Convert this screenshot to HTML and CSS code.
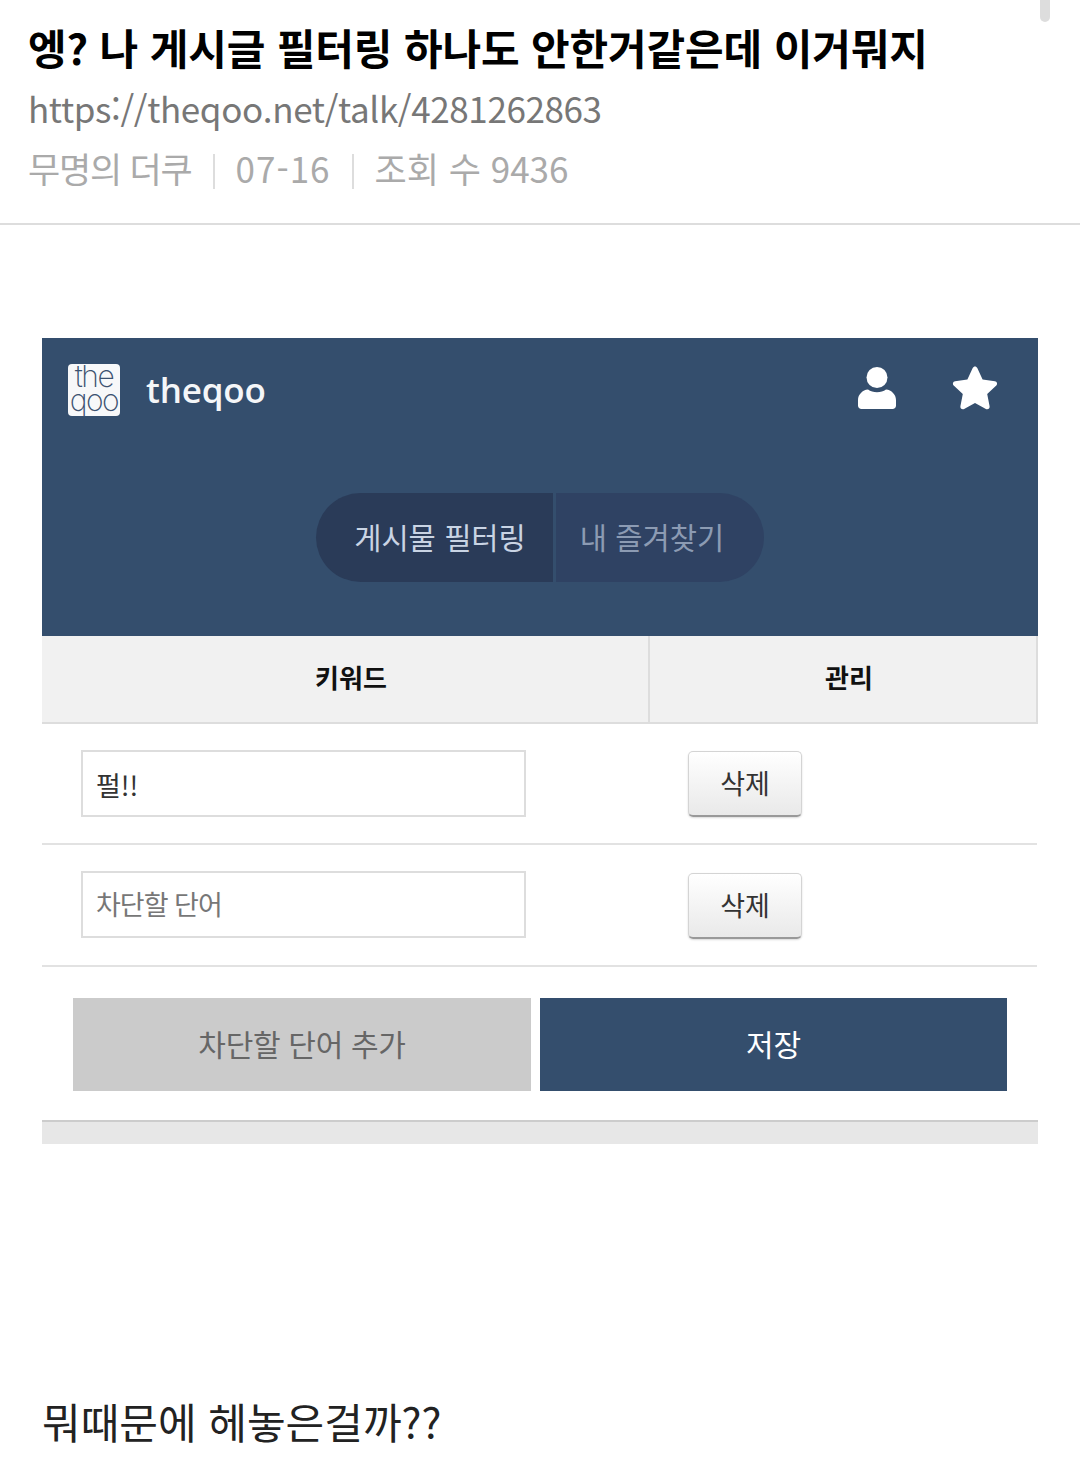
FILE: index.html
```html
<!DOCTYPE html>
<html lang="ko">
<head>
    <meta charset="UTF-8">
    <title>theqoo</title>
    <link rel="stylesheet" href="styles.css">
</head>
<body>
    <div class="scroll-thumb"></div>
    <header class="post-head">
        <h1 class="post-title">엥? 나 게시글 필터링 하나도 안한거같은데 이거뭐지</h1>
        <p class="post-url">https://theqoo.net/talk/4281262863</p>
        <p class="post-meta">
            <span class="meta-name">무명의 더쿠</span>
            <span class="sep"></span>
            <span class="meta-date">07-16</span>
            <span class="sep"></span>
            <span>조회 수 9436</span>
        </p>
    </header>

    <section class="shot">
        <div class="shot-top">
            <div class="topbar">
                <div class="logo">
                    <div class="logo-mark">the
qoo</div>
                    <span class="logo-name">theqoo</span>
                </div>
                <div class="top-icons">
                    <svg class="icon-user" viewBox="0 0 38 42"><circle cx="19" cy="10.500" r="10.500" fill="#fff"/><path d="M10 22.500c2.500 1.800 5.500 2.800 9 2.800s6.500-1 9-2.800c5.500.5 10 5 10 10.500v5.500c0 2-1.500 3.500-3.500 3.500h-31C1.500 42 0 40.500 0 38.500V33c0-5.500 4.500-10 10-10.500z" fill="#fff"/></svg>
                    <svg class="icon-star" viewBox="0 0 46 44"><path d="M23 .5c1 0 1.800.6 2.300 1.600l5.300 11.500 12.300 1.600c2.100.3 2.900 2.800 1.400 4.200l-9.100 8.600 2.400 12.300c.4 2.100-1.800 3.700-3.700 2.700L23 37l-10.900 6c-1.900 1-4.100-.6-3.700-2.700l2.400-12.300-9.100-8.600c-1.500-1.400-.7-3.900 1.400-4.200l12.300-1.600 5.300-11.500C21.200 1.100 22 .5 23 .5z" fill="#fff"/></svg>
                </div>
            </div>
            <div class="tabs">
                <div class="tab tab-on">게시물 필터링</div>
                <div class="tab tab-off">내 즐겨찾기</div>
            </div>
        </div>

        <div class="row row-head">
            <div class="cell-key">키워드</div>
            <div class="cell-manage">관리</div>
        </div>
        <div class="row row-word row-first">
            <div class="word-input">펄!!</div>
            <button class="btn-delete">삭제</button>
        </div>
        <div class="row row-word row-second">
            <div class="word-input is-empty">차단할 단어</div>
            <button class="btn-delete">삭제</button>
        </div>
        <div class="actions">
            <button class="btn-add">차단할 단어 추가</button>
            <button class="btn-save">저장</button>
        </div>
        <div class="shot-foot"></div>
    </section>

    <p class="post-body">뭐때문에 헤놓은걸까??</p>
</body>
</html>
```

FILE: styles.css
```css
*{
    margin: 0;
    padding: 0;
    box-sizing: border-box;
    font-family: "Noto Sans CJK KR", "Noto Sans", sans-serif;
}
body{
    background: #fff;
    width: 1080px;
    height: 1478px;
    overflow: hidden;
    position: relative;
}
.scroll-thumb{
    position: absolute;
    top: 0;
    left: 1040px;
    width: 10px;
    height: 22px;
    background: #ddd;
    border-radius: 0 0 5px 5px;
}
.post-head{
    padding: 17px 28px 0;
    height: 225px;
    border-bottom: 2px solid #ddd;
}
.post-title{
    font-size: 42px;
    font-weight: 700;
    line-height: 60px;
    color: #000;
    letter-spacing: -0.14px;
}
.post-url{
    font-size: 35px;
    line-height: 60px;
    color: #777;
    letter-spacing: -0.38px;
    margin-top: 1px;
}
.post-meta{
    display: flex;
    align-items: center;
    gap: 21px;
    font-size: 35px;
    line-height: 60px;
    color: #aaa;
}
.meta-name{
    letter-spacing: -1.2px;
}
.meta-date{
    letter-spacing: 1px;
}
.sep{
    width: 2px;
    height: 35px;
    margin-top: 6px;
    background: #ddd;
}
.shot{
    margin: 113px 42px 0;
    width: 996px;
}
.shot-top{
    height: 298px;
    background: #344e6d;
    padding: 26px 40px 0 26px;
}
.topbar{
    display: flex;
    align-items: flex-start;
    justify-content: space-between;
}
.logo{
    display: flex;
    align-items: center;
    gap: 26px;
}
.logo-mark{
    width: 52px;
    height: 52px;
    background: #f7f8f9;
    border-radius: 4px;
    text-align: center;
    white-space: pre-line;
    font-family: "Inter", sans-serif;
    font-weight: 200;
    font-size: 30px;
    line-height: 24px;
    letter-spacing: -1.5px;
    color: #3c5270;
}
.logo-name{
    font-family: "Open Sans", sans-serif;
    font-size: 35px;
    font-weight: 600;
    letter-spacing: -0.2px;
    padding-bottom: 2px;
    color: #f4f6f8;
}
.top-icons{
    display: flex;
    align-items: center;
    gap: 56px;
    padding-top: 2px;
}
.icon-user{
    width: 38px;
    height: 42px;
}
.icon-star{
    width: 46px;
    height: 44px;
}
.tabs{
    display: flex;
    width: 448px;
    height: 89px;
    margin: 77px 0 0 248px;
}
.tab{
    display: flex;
    align-items: center;
    justify-content: center;
    font-size: 29.600px;
    padding-bottom: 2px;
}
.tab-on{
    width: 237px;
    background: #2a3b58;
    color: #c9d4e4;
    border-radius: 45px 0 0 45px;
    padding-left: 11px;
}
.tab-off{
    flex: 1;
    margin-left: 3px;
    background: #2f4263;
    color: #8c9bb3;
    border-radius: 0 45px 45px 0;
    padding-right: 16px;
}
.row{
    display: flex;
    align-items: center;
}
.row-head{
    height: 88px;
    background: #f1f1f1;
    border-bottom: 2px solid #ddd;
    border-right: 2px solid #ddd;
    font-size: 26px;
    font-weight: 700;
    line-height: 82px;
    color: #111;
    text-align: center;
}
.cell-key{
    width: 608px;
    height: 100%;
    padding-left: 12px;
    border-right: 2px solid #ddd;
}
.cell-manage{
    flex: 1;
    height: 100%;
    padding-left: 12px;
}
.row-word{
    height: 122px;
    padding-left: 39px;
    border-bottom: 2px solid #e2e2e2;
    margin-right: 1px;
}
.row-first{
    height: 121px;
}
.row-second .word-input{
    margin-bottom: 2px;
    line-height: 62px;
}
.row-second .btn-delete{
    margin-top: 2px;
}
.word-input{
    width: 445px;
    height: 67px;
    border: 2px solid #ddd;
    padding-left: 13px;
    font-size: 27px;
    line-height: 66px;
    color: #333;
}
.word-input.is-empty{
    color: #777;
    letter-spacing: -1px;
}
.btn-delete{
    width: 114px;
    height: 66px;
    margin-left: 162px;
    padding-bottom: 2px;
    border: 1px solid #d4d4d4;
    border-bottom: 2px solid #999;
    border-radius: 5px;
    background: linear-gradient(#fff, #e9e9e9);
    box-shadow: 0 1px 2px rgba(0, 0, 0, 0.15);
    font-size: 27px;
    color: #333;
}
.actions{
    display: flex;
    gap: 9px;
    padding: 31px 31px 0;
}
.actions button{
    height: 93px;
    padding-bottom: 4px;
    border: 0;
    font-size: 30px;
}
.btn-add{
    width: 458px;
    background: #cbcbcb;
    color: #666;
    letter-spacing: -0.3px;
}
.btn-save{
    flex: 1;
    background: #344e6d;
    color: #fff;
}
.shot-foot{
    height: 24px;
    margin-top: 29px;
    background: #e7e7e7;
    border-top: 2px solid #ccc;
}
.post-body{
    margin: 249px 0 0 42px;
    font-size: 42px;
    line-height: 56px;
    color: #222;
}
```
